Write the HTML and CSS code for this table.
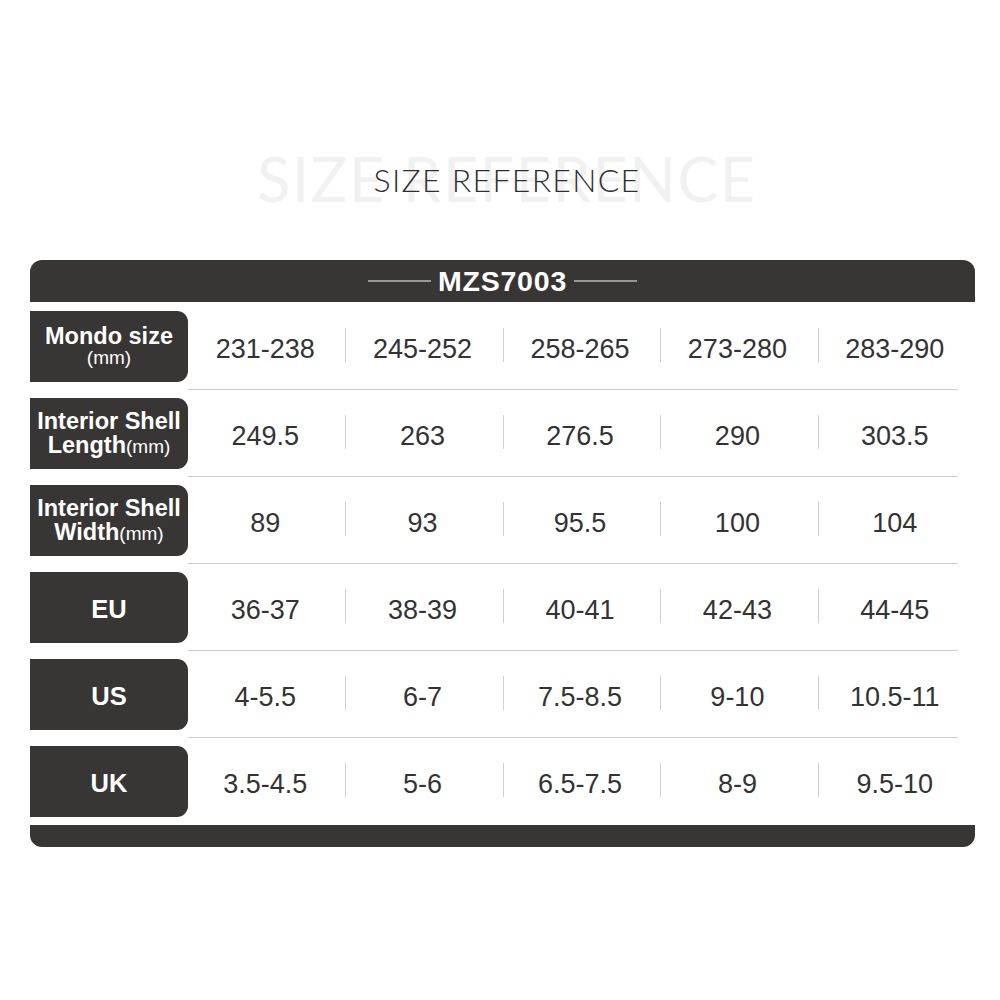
FILE: index.html
```html
<!DOCTYPE html>
<html lang="en">
<head>
<meta charset="utf-8">
<title>Size Reference</title>
<link rel="stylesheet" href="styles.css">
</head>
<body>
<div class="page">
  <div class="heading">
    <span class="heading-ghost" aria-hidden="true">SIZE REFERENCE</span>
    <h1 class="heading-title">SIZE REFERENCE</h1>
  </div>

  <div class="chart">
    <div class="chart-head">
      <span class="head-line"></span>
      <span class="head-model">MZS7003</span>
      <span class="head-line"></span>
    </div>

    <div class="chart-body">
      <div class="row">
        <div class="label"><span class="label-main">Mondo size</span><span class="label-unit">(mm)</span></div>
        <div class="cells">
          <div class="cell">231-238</div><div class="cell">245-252</div><div class="cell">258-265</div><div class="cell">273-280</div><div class="cell">283-290</div>
        </div>
      </div>
      <div class="rule"></div>
      <div class="row">
        <div class="label"><span class="label-main">Interior Shell</span><span class="label-main">Length<span class="unit-inline">(mm)</span></span></div>
        <div class="cells">
          <div class="cell">249.5</div><div class="cell">263</div><div class="cell">276.5</div><div class="cell">290</div><div class="cell">303.5</div>
        </div>
      </div>
      <div class="rule"></div>
      <div class="row">
        <div class="label"><span class="label-main">Interior Shell</span><span class="label-main">Width<span class="unit-inline">(mm)</span></span></div>
        <div class="cells">
          <div class="cell">89</div><div class="cell">93</div><div class="cell">95.5</div><div class="cell">100</div><div class="cell">104</div>
        </div>
      </div>
      <div class="rule"></div>
      <div class="row">
        <div class="label"><span class="label-main label-big">EU</span></div>
        <div class="cells">
          <div class="cell">36-37</div><div class="cell">38-39</div><div class="cell">40-41</div><div class="cell">42-43</div><div class="cell">44-45</div>
        </div>
      </div>
      <div class="rule"></div>
      <div class="row">
        <div class="label"><span class="label-main label-big">US</span></div>
        <div class="cells">
          <div class="cell">4-5.5</div><div class="cell">6-7</div><div class="cell">7.5-8.5</div><div class="cell">9-10</div><div class="cell">10.5-11</div>
        </div>
      </div>
      <div class="rule"></div>
      <div class="row">
        <div class="label"><span class="label-main label-big">UK</span></div>
        <div class="cells">
          <div class="cell">3.5-4.5</div><div class="cell">5-6</div><div class="cell">6.5-7.5</div><div class="cell">8-9</div><div class="cell">9.5-10</div>
        </div>
      </div>
    </div>

    <div class="chart-foot"></div>
  </div>
</div>
</body>
</html>
```

FILE: styles.css
```css
* {
  box-sizing: border-box;
}

html, body {
  margin: 0;
  padding: 0;
  background: #ffffff;
}

body {
  font-family: "Liberation Sans", Arial, sans-serif;
  color: #333333;
}

.page {
  width: 1000px;
  height: 1000px;
  padding-top: 150px;
}

.heading {
  position: relative;
  height: 110px;
  display: flex;
  justify-content: center;
  padding-left: 14px;
}

.heading-ghost {
  position: absolute;
  left: 0;
  right: 0;
  top: -1px;
  padding-left: 14px;
  text-align: center;
  font-family: Lato, "Open Sans", sans-serif;
  font-weight: 400;
  font-size: 61px;
  line-height: 60px;
  letter-spacing: 1.6px;
  color: #f1f1f1;
}

.heading-title {
  position: relative;
  margin: 0;
  margin-top: 12px;
  font-family: Lato, "Open Sans", sans-serif;
  font-weight: 300;
  font-size: 32px;
  line-height: 36px;
  letter-spacing: 1.3px;
  color: #2f2f2f;
}

.chart {
  margin-left: 30px;
  width: 945px;
}

.chart-head {
  height: 42px;
  background: #383634;
  border-radius: 12px 12px 0 0;
  display: flex;
  align-items: center;
  justify-content: center;
  gap: 7px;
  padding-left: 0;
}

.head-line {
  width: 63px;
  height: 2px;
  background: #9a9896;
}

.head-model {
  font-weight: 700;
  font-size: 28.5px;
  letter-spacing: 0.8px;
  color: #ffffff;
  line-height: 1;
}

.chart-body {
  padding: 9px 0 8px;
}

.row {
  display: flex;
  height: 71px;
}

.label {
  width: 158px;
  flex: none;
  background: #383634;
  border-radius: 0 11px 11px 0;
  display: flex;
  flex-direction: column;
  align-items: center;
  justify-content: center;
  color: #ffffff;
  text-align: center;
}

.label-main {
  font-weight: 700;
  font-size: 23.5px;
  line-height: 24px;
  white-space: nowrap;
}

.label-big {
  font-size: 25.5px;
  padding-top: 2px;
}

.label-unit {
  font-size: 19px;
  line-height: 20px;
  margin-bottom: 2px;
}

.unit-inline {
  font-weight: 400;
  font-size: 19px;
}

.cells {
  flex: 1;
  display: grid;
  grid-template-columns: repeat(5, 1fr);
  align-items: center;
}

.cell {
  position: relative;
  text-align: center;
  font-size: 27px;
  line-height: 34px;
  padding-top: 4px;
  padding-right: 3px;
  color: #333333;
}

.cell + .cell::before {
  content: "";
  position: absolute;
  left: 0;
  top: 0;
  width: 1px;
  height: 34px;
  background: #cfcfcf;
}

.rule {
  margin: 7px 17px 8px 158px;
  height: 1px;
  background: #cccccc;
}

.chart-foot {
  height: 22px;
  background: #383634;
  border-radius: 0 0 12px 12px;
}
```
